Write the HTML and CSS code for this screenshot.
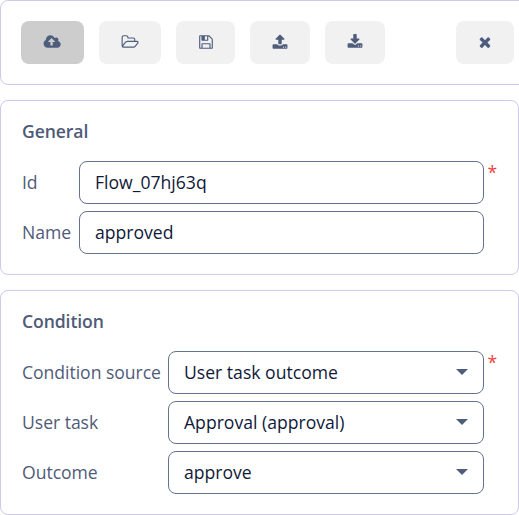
FILE: index.html
```html
<!DOCTYPE html>
<html lang="en">
<head>
<meta charset="utf-8">
<title>Flow properties</title>
<link rel="stylesheet" href="styles.css">
</head>
<body>
<div class="toolbar">
  <button class="btn btn-deploy" aria-label="Deploy"><svg class="icon wide" viewBox="0 0 2048 1792"><path d="M1344 864q0-14-9-23l-352-352q-9-9-23-9t-23 9l-351 351q-10 12-10 24 0 14 9 23t23 9h224v352q0 13 9.5 22.5t22.5 9.5h192q13 0 22.5-9.5t9.5-22.5v-352h224q13 0 22.5-9.5t9.5-22.5zm640 288q0 159-112.5 271.5t-271.5 112.5h-1088q-185 0-316.5-131.5t-131.5-316.5q0-130 70-240t188-165q-2-30-2-43 0-212 150-362t362-150q156 0 285.5 87t188.5 231q71-62 166-62 106 0 181 75t75 181q0 76-41 138 130 31 213.5 135.5t83.5 238.5z"/></svg></button>
  <button class="btn btn-open" aria-label="Open"><svg class="icon wide" viewBox="0 0 2048 1792"><path d="M1845 931q0-35-53-35h-1088q-40 0-85.5 21.5t-71.5 52.5l-294 363q-18 24-18 40 0 35 53 35h1088q40 0 86-22t71-53l294-363q18-22 18-39zm-1141-163h768v-160q0-40-28-68t-68-28h-576q-40 0-68-28t-28-68v-64q0-40-28-68t-68-28h-320q-40 0-68 28t-28 68v853l256-315q44-53 116-87.5t140-34.5zm1269 163q0 62-46 120l-295 363q-43 53-116 87.5t-140 34.5h-1088q-92 0-158-66t-66-158v-960q0-92 66-158t158-66h320q92 0 158 66t66 158v32h544q92 0 158 66t66 158v160h192q54 0 99 24.5t67 70.5q15 32 15 68z"/></svg></button>
  <button class="btn btn-save" aria-label="Save"><svg class="icon" viewBox="0 0 1792 1792"><path d="M512 1536h768v-384h-768v384zm896 0h128v-896q0-14-10-38.5t-20-34.5l-281-281q-10-10-34-20t-39-10v416q0 40-28 68t-68 28h-576q-40 0-68-28t-28-68v-416h-128v1280h128v-416q0-40 28-68t68-28h832q40 0 68 28t28 68v416zm-384-928v-320q0-13-9.5-22.5t-22.5-9.5h-192q-13 0-22.5 9.5t-9.5 22.5v320q0 13 9.5 22.5t22.5 9.5h192q13 0 22.5-9.5t9.5-22.5zm640 32v928q0 40-28 68t-68 28h-1344q-40 0-68-28t-28-68v-1344q0-40 28-68t68-28h928q40 0 88 20t76 48l280 280q28 28 48 76t20 88z"/></svg></button>
  <button class="btn" aria-label="Upload"><svg class="icon" viewBox="0 0 1792 1792"><path d="M1344 1472q0-26-19-45t-45-19-45 19-19 45 19 45 45 19 45-19 19-45zm256 0q0-26-19-45t-45-19-45 19-19 45 19 45 45 19 45-19 19-45zm128-224v320q0 40-28 68t-68 28h-1472q-40 0-68-28t-28-68v-320q0-40 28-68t68-28h427q21 56 70.5 92t110.5 36h256q61 0 110.5-36t70.5-92h427q40 0 68 28t28 68zm-325-648q-17 40-59 40h-256v448q0 26-19 45t-45 19h-256q-26 0-45-19t-19-45v-448h-256q-42 0-59-40-17-39 14-69l448-448q18-19 45-19t45 19l448 448q31 30 14 69z"/></svg></button>
  <button class="btn" aria-label="Download"><svg class="icon" viewBox="0 0 1792 1792"><path d="M1344 1344q0-26-19-45t-45-19-45 19-19 45 19 45 45 19 45-19 19-45zm256 0q0-26-19-45t-45-19-45 19-19 45 19 45 45 19 45-19 19-45zm128-224v320q0 40-28 68t-68 28h-1472q-40 0-68-28t-28-68v-320q0-40 28-68t68-28h465l135 136q58 56 136 56t136-56l136-136h464q40 0 68 28t28 68zm-325-569q17 41-14 70l-448 448q-18 19-45 19t-45-19l-448-448q-31-29-14-70 17-39 59-39h256v-448q0-26 19-45t45-19h256q26 0 45 19t19 45v448h256q42 0 59 39z"/></svg></button>
  <button class="btn btn-close" aria-label="Close"><svg class="icon" viewBox="0 0 1792 1792"><path d="M1490 1322q0 40-28 68l-136 136q-28 28-68 28t-68-28l-294-294-294 294q-28 28-68 28t-68-28l-136-136q-28-28-28-68t28-68l294-294-294-294q-28-28-28-68t28-68l136-136q28-28 68-28t68 28l294 294 294-294q28-28 68-28t68 28l136 136q28 28 28 68t-28 68l-294 294 294 294q28 28 28 68z"/></svg></button>
</div>
<section class="panel">
  <h2>General</h2>
  <div class="fields general">
    <span class="label">Id</span><div class="input">Flow_07hj63q</div><span class="required">*</span>
    <span class="label">Name</span><div class="input">approved</div>
  </div>
</section>
<section class="panel">
  <h2>Condition</h2>
  <div class="fields condition">
    <span class="label">Condition source</span><div class="input">User task outcome<i class="caret"></i></div><span class="required">*</span>
    <span class="label">User task</span><div class="input">Approval (approval)<i class="caret"></i></div><span></span>
    <span class="label">Outcome</span><div class="input">approve<i class="caret"></i></div>
  </div>
</section>
</body>
</html>
```
FILE: styles.css
```css
* { box-sizing: border-box; }
body {
  margin: 0;
  height: 515px;
  overflow: hidden;
  display: flex;
  flex-direction: column;
  gap: 15px;
  background: #fff;
  color: #4f5b79;
  font: 380 17.6px/24px "Open Sans", sans-serif;
}
.toolbar {
  width: 535px;
  height: 85px;
  flex: none;
  display: flex;
  gap: 15px;
  padding: 20px;
  border: 1px solid #cfc9eb;
  border-radius: 8px;
}
.btn {
  width: 60px;
  height: 43px;
  padding: 0 0 1px;
  display: flex;
  align-items: center;
  justify-content: center;
  border: 0;
  border-radius: 8px;
  background: #f1f1f1;
}
.btn-deploy { width: 63px; background: #cdcdcd; }
.btn-open { width: 62px; }
.btn-save { width: 59px; }
.btn-close { width: 58px; margin-left: auto; }
.icon { width: 16px; height: 16px; fill: #4f5d7d; }
.wide { width: 18.3px; }
.panel {
  padding: 18px 20px 20px;
  border: 1px solid #cfc9eb;
  border-radius: 8px;
}
h2 {
  margin: 0 0 18px;
  font-size: 17.6px;
  font-weight: 600;
  line-height: 24px;
  letter-spacing: -0.1px;
  padding-left: 1px;
}
.fields { display: grid; row-gap: 7px; align-items: center; }
.general { grid-template-columns: 58px 405px 14px; }
.condition { grid-template-columns: 147px 316px 14px; }
.label { white-space: nowrap; padding: 0 0 1px 1px; letter-spacing: -0.04px; }
.input {
  height: 43px;
  display: flex;
  align-items: center;
  justify-content: space-between;
  padding: 0 15.5px 2px 15px;
  border: 1px solid #64718f;
  border-radius: 8px;
  color: #101a38;
}
.caret {
  border: 6px solid transparent;
  border-top-color: #4f5d7d;
  border-bottom: 0;
}
.required { align-self: start; margin-top: -1px; padding-left: 3.5px; color: #ee3f3f; }
```
